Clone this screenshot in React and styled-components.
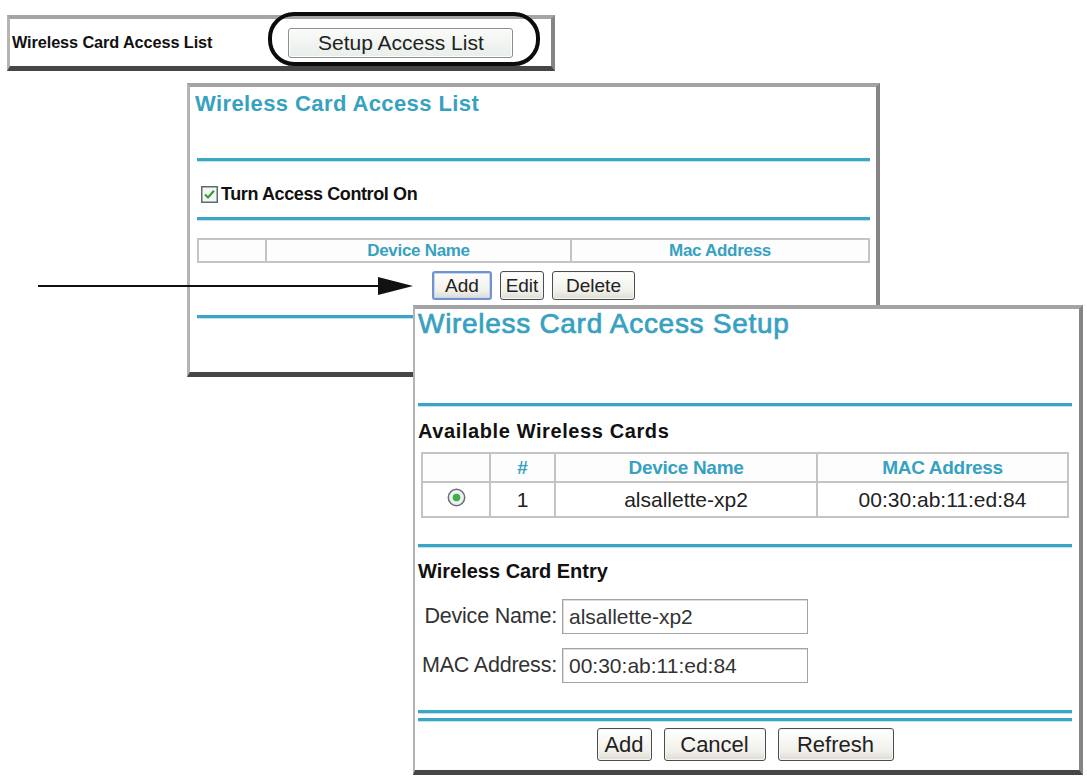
import React from "react";
import styled, { createGlobalStyle } from "styled-components";

const GlobalStyle = createGlobalStyle`
  html, body {
    margin: 0;
    padding: 0;
    background: #ffffff;
    font-family: "Liberation Sans", Arial, sans-serif;
  }
`;

const teal = "#37a1c1";

const Canvas = styled.div`
  position: relative;
  width: 1087px;
  height: 779px;
  overflow: hidden;
  background: #ffffff;
`;

// each screenshot window sits at its place on the canvas
const Window = styled.div`
  position: absolute;
  left: ${(p) => p.$x}px;
  top: ${(p) => p.$y}px;
  width: ${(p) => p.$w}px;
  height: ${(p) => p.$h}px;
  box-sizing: border-box;
  background: #ffffff;
  border-top: 4px solid #a4a4a4;
  border-left: ${(p) => p.$left || 3}px solid #b4b4b4;
  border-right: 4px solid #858585;
  border-bottom: 5px solid #464646;
  display: flex;
  flex-direction: column;
  padding: ${(p) => p.$pad || "0"};
`;

const TopBar = styled(Window)`
  flex-direction: row;
  align-items: center;
  padding: 0 0 0 2px;
  gap: 76px;
`;

const BarLabel = styled.span`
  font-size: 16.3px;
  font-weight: bold;
  color: #111;
  letter-spacing: -0.1px;
`;

const Ring = styled.div`
  position: absolute;
  left: 268px;
  top: 12px;
  width: 272px;
  height: 54px;
  box-sizing: border-box;
  border: 4px solid #0c0c0c;
  border-radius: 26px;
`;

const TitleArea = styled.div`
  height: ${(p) => p.$h}px;
  flex-shrink: 0;
`;

const Title = styled.h1`
  margin: ${(p) => p.$m};
  font-size: ${(p) => p.$size}px;
  line-height: ${(p) => p.$size + 4}px;
  font-weight: ${(p) => (p.$bold ? "bold" : "normal")};
  letter-spacing: ${(p) => p.$ls}px;
  color: ${teal};
  -webkit-text-stroke: ${(p) => (p.$bold ? "0" : "0.7px")} ${teal};
  white-space: nowrap;
`;

const Rule = styled.div`
  height: 3px;
  flex-shrink: 0;
  margin-top: ${(p) => p.$mt || 0}px;
  background: #3aa5c4;
  box-shadow: 0 1px 0 #bfe3ee;
`;

const CheckRow = styled.label`
  height: 56px;
  box-sizing: border-box;
  padding: 10px 0 0 4px;
  display: flex;
  align-items: center;
  gap: 3px;
  font-size: 18px;
  font-weight: bold;
  color: #111;
  letter-spacing: -0.4px;
`;

const Grid = styled.table`
  border-collapse: collapse;
  margin: ${(p) => p.$m || "0"};
  flex-shrink: 0;
  border: 2px solid #c4c4c4;
  table-layout: fixed;
`;

const HeadCell = styled.th`
  width: ${(p) => (p.$w ? `${p.$w}px` : "auto")};
  height: ${(p) => p.$h}px;
  padding: 0;
  border: 2px solid #c4c4c4;
  background: #fdfdfd;
  color: ${teal};
  font-size: ${(p) => p.$size}px;
  font-weight: bold;
  letter-spacing: -0.3px;
  text-align: center;
`;

const Cell = styled.td`
  height: ${(p) => p.$h}px;
  padding: 0;
  border: 2px solid #c4c4c4;
  font-size: 21px;
  color: #222;
  text-align: center;
  vertical-align: middle;
`;

const ButtonRow = styled.div`
  display: flex;
  justify-content: center;
  gap: ${(p) => p.$gap}px;
  margin-top: ${(p) => p.$mt}px;
  flex-shrink: 0;
`;

const Button = styled.button`
  width: ${(p) => p.$w}px;
  height: ${(p) => p.$h}px;
  padding: 0;
  box-sizing: border-box;
  font-family: "Liberation Sans", Arial, sans-serif;
  font-size: ${(p) => p.$size}px;
  color: #222;
  background: linear-gradient(#ffffff, #f1f0ea 70%, #dedcd3);
  border: ${(p) => (p.$focus ? "2px solid #6f93cf" : "1px solid #4c4c4c")};
  border-radius: 3px;
  box-shadow: ${(p) => (p.$focus ? "inset 0 0 0 1px #c6d6f2" : "inset 0 0 0 1px #f6f6f6")};
`;

const SetupButton = styled(Button)`
  background: linear-gradient(#f9fbf9, #e9eeea);
  border: 1px solid #8a8f8c;
  box-shadow: inset 0 0 0 1px #ffffff;
`;

const SectionLabel = styled.div`
  margin-top: ${(p) => p.$mt}px;
  font-size: 20px;
  line-height: 24px;
  font-weight: bold;
  color: #111;
  letter-spacing: ${(p) => p.$ls || 0}px;
  flex-shrink: 0;
`;

const FieldRow = styled.div`
  display: flex;
  align-items: center;
  gap: 5px;
  margin-top: ${(p) => p.$mt}px;
  flex-shrink: 0;
`;

const FieldLabel = styled.span`
  width: 139px;
  text-align: right;
  font-size: 21.5px;
  color: #333;
  white-space: nowrap;
  letter-spacing: -0.2px;
`;

const TextInput = styled.input`
  width: 246px;
  height: 35px;
  box-sizing: border-box;
  padding: 0 6px;
  font-family: "Liberation Sans", Arial, sans-serif;
  font-size: 21px;
  color: #333;
  border: 1px solid #a3a3a3;
  box-shadow: inset 1px 1px 0 #dcdcdc;
  background: #fff;
`;

const Arrow = styled.svg`
  position: absolute;
  left: 38px;
  top: 276px;
`;

function CheckBox() {
  return (
    <svg width="17" height="17" viewBox="0 0 17 17">
      <rect x="0.75" y="0.75" width="15.5" height="15.5" fill="#f4f6f4" stroke="#5d6b73" strokeWidth="1.5" />
      <path d="M4 8.5 L7 11.5 L13 4.8" fill="none" stroke="#3a9a3a" strokeWidth="2.2" />
    </svg>
  );
}

function Radio() {
  return (
    <svg width="19" height="19" viewBox="0 0 19 19">
      <circle cx="9.5" cy="9.5" r="8.2" fill="#eef1ef" stroke="#66707a" strokeWidth="1.5" />
      <circle cx="9.5" cy="9.5" r="3.8" fill="#3fae4c" />
    </svg>
  );
}

export default function App() {
  return (
    <>
      <GlobalStyle />
      <Canvas>
        <TopBar $x={7} $y={15} $w={548} $h={56}>
          <BarLabel>Wireless Card Access List</BarLabel>
          <SetupButton $w={225} $h={30} $size={21}>
            Setup Access List
          </SetupButton>
        </TopBar>
        <Ring />

        <Window $x={187} $y={83} $w={693} $h={294} $pad="0 6px 0 7px">
          <TitleArea $h={71}>
            <Title $size={22} $bold $ls={0.4} $m="4px 0 0 -2px">
              Wireless Card Access List
            </Title>
          </TitleArea>
          <Rule />
          <CheckRow>
            <CheckBox />
            Turn Access Control On
          </CheckRow>
          <Rule />
          <Grid $m="18px 0 0 0">
            <thead>
              <tr>
                <HeadCell $w={66} $h={21} $size={17} />
                <HeadCell $w={303} $h={21} $size={17}>Device Name</HeadCell>
                <HeadCell $h={21} $size={17}>Mac Address</HeadCell>
              </tr>
            </thead>
          </Grid>
          <ButtonRow $gap={8} $mt={8}>
            <Button $w={60} $h={29} $size={19} $focus>Add</Button>
            <Button $w={44} $h={29} $size={19}>Edit</Button>
            <Button $w={83} $h={29} $size={19}>Delete</Button>
          </ButtonRow>
          <Rule $mt={15} />
        </Window>

        <Arrow width="376" height="20" viewBox="0 0 376 20">
          <line x1="0" y1="10" x2="346" y2="10" stroke="#111" strokeWidth="2" />
          <path d="M340 1 L375 10 L340 19 Z" fill="#111" />
        </Arrow>

        <Window $x={413} $y={305} $w={670} $h={470} $left={2} $pad="0 7px 0 3px">
          <TitleArea $h={94}>
            <Title $size={28} $ls={0.7} $m="-1px 0 0 0">
              Wireless Card Access Setup
            </Title>
          </TitleArea>
          <Rule />
          <SectionLabel $mt={13} $ls={0.6}>Available Wireless Cards</SectionLabel>
          <Grid $m="9px 3px 0 3px">
            <thead>
              <tr>
                <HeadCell $w={66} $h={27} $size={19} />
                <HeadCell $w={63} $h={27} $size={19}>#</HeadCell>
                <HeadCell $w={260} $h={27} $size={19}>Device Name</HeadCell>
                <HeadCell $h={27} $size={19}>MAC Address</HeadCell>
              </tr>
            </thead>
            <tbody>
              <tr>
                <Cell $h={33}>
                  <Radio />
                </Cell>
                <Cell $h={33}>1</Cell>
                <Cell $h={33}>alsallette-xp2</Cell>
                <Cell $h={33}>00:30:ab:11:ed:84</Cell>
              </tr>
            </tbody>
          </Grid>
          <Rule $mt={26} />
          <SectionLabel $mt={12}>Wireless Card Entry</SectionLabel>
          <FieldRow $mt={16}>
            <FieldLabel>Device Name:</FieldLabel>
            <TextInput defaultValue="alsallette-xp2" />
          </FieldRow>
          <FieldRow $mt={14}>
            <FieldLabel>MAC Address:</FieldLabel>
            <TextInput defaultValue="00:30:ab:11:ed:84" />
          </FieldRow>
          <Rule $mt={27} />
          <Rule $mt={5} />
          <ButtonRow $gap={12} $mt={7}>
            <Button $w={55} $h={33} $size={22}>Add</Button>
            <Button $w={102} $h={33} $size={22}>Cancel</Button>
            <Button $w={116} $h={33} $size={22}>Refresh</Button>
          </ButtonRow>
        </Window>
      </Canvas>
    </>
  );
}
